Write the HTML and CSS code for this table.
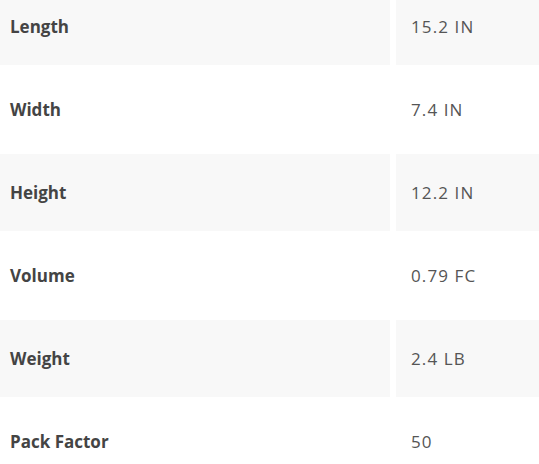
FILE: index.html
```html
<!DOCTYPE html>
<html>
<head>
<meta charset="utf-8">
<link rel="stylesheet" href="styles.css">
</head>
<body>
<table class="specs">
  <colgroup><col class="c-label"><col class="c-value"></colgroup>
  <tbody>
    <tr class="alt"><th>Length</th><td>15.2 IN</td></tr>
    <tr><th>Width</th><td>7.4 IN</td></tr>
    <tr class="alt"><th>Height</th><td>12.2 IN</td></tr>
    <tr><th>Volume</th><td>0.79 FC</td></tr>
    <tr class="alt"><th>Weight</th><td>2.4 LB</td></tr>
    <tr><th>Pack Factor</th><td>50</td></tr>
  </tbody>
</table>
</body>
</html>
```
FILE: styles.css
```css
html, body {
  margin: 0;
  padding: 0;
  background: #ffffff;
  overflow: hidden;
}
.specs {
  margin: -18px 0 0 -6px;
  border-collapse: separate;
  border-spacing: 6px;
  table-layout: fixed;
  width: 570px;
  font-family: "Open Sans", "Liberation Sans", sans-serif;
  font-size: 17px;
}
.c-label { width: 390px; }
.specs th, .specs td {
  height: 77px;
  padding: 0;
  box-sizing: border-box;
  vertical-align: middle;
  text-align: left;
}
.specs th {
  padding-left: 10px;
  padding-bottom: 1px;
  font-weight: 700;
  color: #444444;
}
.specs td {
  padding-left: 15px;
  padding-bottom: 1px;
  font-weight: 400;
  letter-spacing: 1.1px;
  color: #555555;
}
.specs tr.alt th, .specs tr.alt td {
  background: #f8f8f8;
}
```
